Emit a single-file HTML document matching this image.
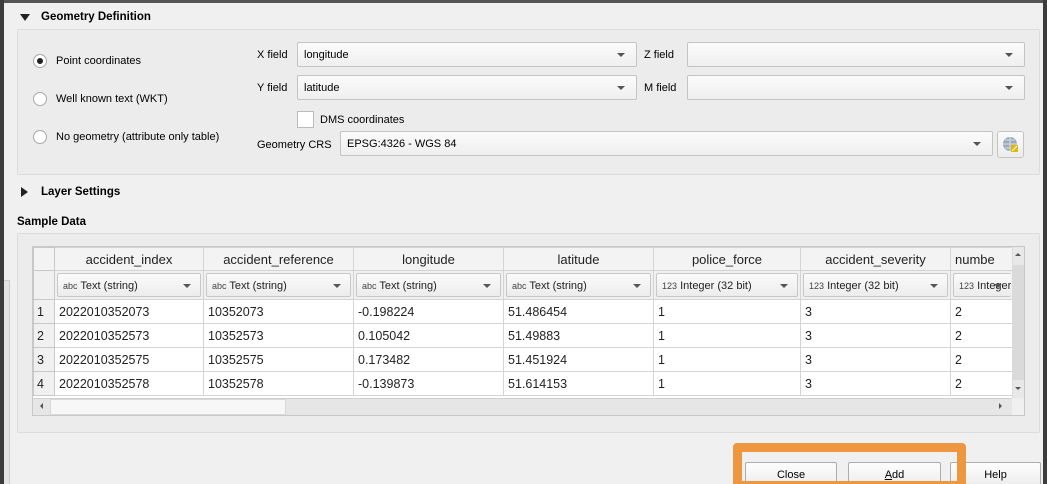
<!DOCTYPE html>
<html style="width:1047px;height:484px;overflow:hidden"><head><meta charset="utf-8"><style>
*{box-sizing:border-box;margin:0;padding:0}
body{width:1047px;height:484px;overflow:hidden;background:#f0f0f0;position:relative;font-family:"Liberation Sans",Arial,sans-serif;font-size:11px;color:#000}
.a{position:absolute}
.b{font-weight:bold}
.grp{position:absolute;border:1px solid #dcdcdc;border-radius:2px;background:#ececec}
.cb{position:absolute;height:25px;border:1px solid #c4c4c4;border-radius:2px;background:linear-gradient(#fbfbfb,#efefef);padding:6px 0 0 6px;white-space:nowrap}
.cb:after{content:"";position:absolute;right:11px;top:10px;border-left:4px solid transparent;border-right:4px solid transparent;border-top:4px solid #555}
.radio{position:absolute;width:14px;height:14px;border-radius:50%;border:1px solid #a8a8a8;background:#fff}
.tri{position:absolute;width:0;height:0}
table{border-collapse:collapse;table-layout:fixed;position:absolute;left:33px;top:247px;font-size:12.5px}
td{border:1px solid #d4d4d4;height:24px;padding:0 4px;white-space:nowrap;overflow:hidden;background:#fff;color:#222}
td.rn{background:#f0f0f0;border-color:#c8c8c8;padding:0 3px}
tr.h td{background:#f3f3f3;height:23px;text-align:center;font-size:13px;color:#222}
tr.t td{background:#f0f0f0;height:29px;padding:2px}
.tc{position:relative;height:24px;border:1px solid #c8c8c8;border-radius:2px;background:linear-gradient(#fbfbfb,#ececec);font-size:11px;padding:6px 0 0 5px;white-space:nowrap;overflow:hidden}
.tc:after{content:"";position:absolute;right:9px;top:10px;border-left:4px solid transparent;border-right:4px solid transparent;border-top:4px solid #555}
.tc small{font-size:9px;color:#444}
.btn{position:absolute;top:462px;height:26px;border:1px solid #adadad;border-radius:2px;background:linear-gradient(#fdfdfd,#ececec);text-align:center;padding-top:6px;font-size:11px}
</style></head><body>
<div class="a" style="left:0;top:0;width:1047px;height:3px;background:#555"></div>
<div class="a" style="left:0;top:0;width:4px;height:484px;background:#3c3c3c"></div>
<div class="a" style="left:1043px;top:0;width:4px;height:484px;background:#3c3c3c"></div>
<div class="a" style="left:4px;top:280px;width:6px;height:204px;border-top:1px solid #ccc;border-right:1px solid #ccc;background:#e4e4e4"></div>

<div class="tri" style="left:20px;top:14px;border-left:5px solid transparent;border-right:5px solid transparent;border-top:7px solid #222"></div>
<div class="a b" style="left:41px;top:11px;font-size:11.5px">Geometry Definition</div>
<div class="grp" style="left:17px;top:29px;width:1023px;height:146px"></div>

<div class="radio" style="left:33px;top:54px"><div class="a" style="left:3px;top:3px;width:6px;height:6px;border-radius:50%;background:#222"></div></div>
<div class="a" style="left:56px;top:55px">Point coordinates</div>
<div class="radio" style="left:33px;top:92px"></div>
<div class="a" style="left:56px;top:93px">Well known text (WKT)</div>
<div class="radio" style="left:33px;top:130px"></div>
<div class="a" style="left:56px;top:131px">No geometry (attribute only table)</div>

<div class="a" style="left:257px;top:49px">X field</div>
<div class="cb" style="left:297px;top:42px;width:340px">longitude</div>
<div class="a" style="left:644px;top:49px">Z field</div>
<div class="cb" style="left:687px;top:42px;width:338px"></div>
<div class="a" style="left:257px;top:82px">Y field</div>
<div class="cb" style="left:297px;top:75px;width:340px">latitude</div>
<div class="a" style="left:644px;top:82px">M field</div>
<div class="cb" style="left:687px;top:75px;width:338px"></div>
<div class="a" style="left:297px;top:111px;width:17px;height:17px;border:1px solid #bbb;background:#fff"></div>
<div class="a" style="left:320px;top:114px">DMS coordinates</div>
<div class="a" style="left:257px;top:139px">Geometry CRS</div>
<div class="cb" style="left:340px;top:131px;width:653px">EPSG:4326 - WGS 84</div>
<div class="a" style="left:997px;top:131px;width:27px;height:27px;border:1px solid #c4c4c4;border-radius:3px;background:linear-gradient(#fbfbfb,#ececec)">
<svg width="25" height="25" class="a" style="left:0;top:0"><circle cx="12" cy="12" r="7" fill="#9ab"/><path d="M5 12h14M12 5v14M7 8h10M7 16h10" stroke="#dde" stroke-width="1"/><rect x="13" y="13" width="7" height="7" fill="#e0b800"/><path d="M14 19l5-5" stroke="#fff" stroke-width="1"/></svg></div>

<div class="tri" style="left:21px;top:187px;border-top:5px solid transparent;border-bottom:5px solid transparent;border-left:7px solid #222"></div>
<div class="a b" style="left:41px;top:186px;font-size:11.5px">Layer Settings</div>
<div class="a b" style="left:17px;top:216px;font-size:11.5px">Sample Data</div>
<div class="grp" style="left:17px;top:233px;width:1023px;height:200px"></div>
<div class="a" style="left:32px;top:246px;width:993px;height:170px;border:1px solid #c8c8c8;background:#fff"></div>

<table>
<colgroup><col style="width:21px"><col style="width:149px"><col style="width:150px"><col style="width:150px"><col style="width:150px"><col style="width:147px"><col style="width:150px"><col style="width:62px"></colgroup>
<tr class="h"><td class="rn"></td><td>accident_index</td><td>accident_reference</td><td>longitude</td><td>latitude</td><td>police_force</td><td>accident_severity</td><td style="text-align:left">numbe</td></tr>
<tr class="t"><td class="rn"></td><td><div class="tc"><small>abc</small> Text (string)</div></td><td><div class="tc"><small>abc</small> Text (string)</div></td><td><div class="tc"><small>abc</small> Text (string)</div></td><td><div class="tc"><small>abc</small> Text (string)</div></td><td><div class="tc"><small>123</small> Integer (32 bit)</div></td><td><div class="tc"><small>123</small> Integer (32 bit)</div></td><td><div class="tc" style="border-right:none"><small>123</small> Integer</div></td></tr>
<tr><td class="rn">1</td><td>2022010352073</td><td>10352073</td><td>-0.198224</td><td>51.486454</td><td>1</td><td>3</td><td>2</td></tr>
<tr><td class="rn">2</td><td>2022010352573</td><td>10352573</td><td>0.105042</td><td>51.49883</td><td>1</td><td>3</td><td>2</td></tr>
<tr><td class="rn">3</td><td>2022010352575</td><td>10352575</td><td>0.173482</td><td>51.451924</td><td>1</td><td>3</td><td>2</td></tr>
<tr><td class="rn">4</td><td>2022010352578</td><td>10352578</td><td>-0.139873</td><td>51.614153</td><td>1</td><td>3</td><td>2</td></tr>
</table>
<div class="a" style="left:1012px;top:247px;width:12px;height:151px;background:#e8e8e8;border-left:1px solid #ddd"></div>
<div class="a" style="left:1012px;top:265px;width:12px;height:115px;background:#dadada"></div>
<div class="tri" style="left:1015px;top:253px;border-left:3px solid transparent;border-right:3px solid transparent;border-bottom:3px solid #555"></div>
<div class="tri" style="left:1015px;top:387px;border-left:3px solid transparent;border-right:3px solid transparent;border-top:3px solid #555"></div>
<div class="a" style="left:33px;top:398px;width:979px;height:17px;background:#e6e6e6;border-top:1px solid #d0d0d0"></div>
<div class="a" style="left:50px;top:399px;width:236px;height:16px;background:#f7f7f7;border:1px solid #d8d8d8"></div>
<div class="tri" style="left:40px;top:403px;border-top:3px solid transparent;border-bottom:3px solid transparent;border-right:3px solid #555"></div>
<div class="tri" style="left:999px;top:403px;border-top:3px solid transparent;border-bottom:3px solid transparent;border-left:3px solid #555"></div>
<div class="a" style="left:1012px;top:398px;width:12px;height:17px;background:#f0f0f0"></div>

<div class="btn" style="left:745px;width:92px">Close</div>
<div class="btn" style="left:848px;width:93px"><u>A</u>dd</div>
<div class="btn" style="left:950px;width:91px">Help</div>
<div class="a" style="left:733px;top:443px;width:233px;height:47px;border:9px solid #ee9640;border-radius:4px"></div>
</body></html>
